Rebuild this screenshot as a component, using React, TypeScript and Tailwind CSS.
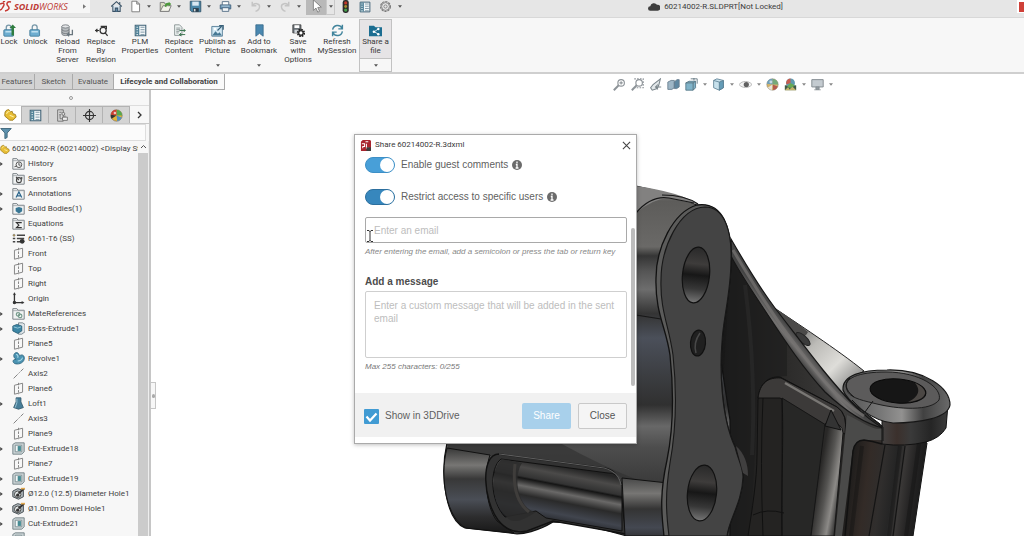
import React from "react";

type IconName = string;

function Glyph({ name }: { name: IconName }) {
  switch (name) {
    case "home":
      return (<g fill="none" stroke="#3a5266" strokeWidth="1.3"><path d="M1.5 8 8 2l6.5 6" /><path d="M3.5 7v7h9V7" fill="#dbe7f0" /><path d="M6.5 14v-4h3v4" fill="#5b87a8" /><path d="M12 2.500v3" /></g>);
    case "doc":
      return <path d="M3.500 1.500h6l3.500 3.500v9.500h-9.500zM9.500 1.500V5H13" fill="#fff" stroke="#777" strokeWidth="1.100" />;
    case "open":
      return (<g strokeWidth="1.100"><path d="M1.500 14V3h5l1 2h5v9z" fill="#d9dcc0" stroke="#777" /><path d="M1.500 14 5 7h10l-3 7z" fill="#f4f4ea" stroke="#777" /><path d="M7 8c0-3 2-5 5-4.500V2l3 3-3 3V6C10 6 9 7 9 9z" fill="#4f9a3c" stroke="none" /></g>);
    case "save":
      return (<g><path d="M1.500 1.500h13v13h-11l-2-2z" fill="#4b87a8" stroke="#2c4f66" /><path d="M4 2h8v5H4z" fill="#d8e8f2" /><path d="M5 10h7v4.500H5z" fill="#2b3e4c" /><path d="M6 11h2v3H6z" fill="#ddd" /></g>);
    case "print":
      return (<g stroke="#44607a"><path d="M4 6V2h8v4" fill="#fff" /><path d="M1.500 6h13v5h-13z" fill="#5f8fb0" /><path d="M4 9.500h8V14H4z" fill="#f2f6f8" /><path d="M3 7.500h10" stroke="#d3e3ee" /></g>);
    case "undo":
      return <path d="M4 2v5h5M4 7c3-4 9-3 9 1 0 3-2 5-5 6" fill="none" stroke="#c4c4c4" strokeWidth="1.800" />;
    case "redo":
      return <path d="M12 2v5H7M12 7C9 3 3 4 3 8c0 3 2 5 5 6" fill="none" stroke="#c4c4c4" strokeWidth="1.800" />;
    case "pointer":
      return <path d="M5 1v12l3-2.600 2 4.600 2-1-2-4.300 4-.4z" fill="#fff" stroke="#666" strokeWidth=".8" />;
    case "traffic":
      return (<g><rect x="4.500" y="0" width="7.500" height="16" rx="3" fill="#2c2c2c" /><circle cx="8.200" cy="3.600" r="2" fill="#c0392b" /><circle cx="8.200" cy="8" r="1.800" fill="#a58a2c" /><circle cx="8.200" cy="12.400" r="2" fill="#44a04a" /></g>);
    case "list":
      return (<g><path d="M1.500 1.500h13v13h-13z" fill="#f3f7f9" stroke="#3f6275" strokeWidth="1.300" /><path d="M2 2h4.500v12H2z" fill="#4f8197" /><path d="M8 4h5M8 7h5M8 10h5M8 13h5" stroke="#6a8797" /><path d="M3 4h2M3 7h2M3 10h2M3 13h2" stroke="#fff" /></g>);
    case "gear":
      return (<g fill="none" stroke="#777"><circle cx="8" cy="8" r="6" strokeWidth="1.500" strokeDasharray="2.800 1.100" /><circle cx="8" cy="8" r="4.800" /><circle cx="8" cy="8" r="2" /></g>);
    case "lock":
    case "unlock":
      return (<g><path d={name === "lock" ? "M4 8V4.500a3 3 0 0 1 6 0V8" : "M4 8V4a3 3 0 0 1 6 0v4"} fill="none" stroke="#7797a8" strokeWidth="1.600" /><rect x="1" y="7" width="12" height="8" rx="1" fill="#6eaed0" stroke="#3b7796" /><path d="M3 8.500h8v2H3z" fill="#bfe0f0" />{name === "lock" && <path d="M10.500 14V5H8l4-4.500L16 5h-2.500v9z" fill="#2f7d3f" />}</g>);
    case "server":
      return (<g><path d="M1 3v9c0 3 9 3 9 0V3" fill="#b9bdc0" stroke="#6d7377" /><ellipse cx="5.500" cy="3" rx="4.500" ry="2" fill="#e4e6e8" stroke="#6d7377" /><path d="M1 6.500c0 3 9 3 9 0M1 9.500c0 3 9 3 9 0" fill="none" stroke="#6d7377" /><path d="M14 7v6H8m2-2-2 2 2 2" fill="none" stroke="#69767e" strokeWidth="1.600" /></g>);
    case "revise":
      return (<g fill="none" stroke="#333" strokeWidth="1.500"><circle cx="10" cy="8" r="3.800" /><path d="m12.500 11 3 3.500M0 8h5M3 6 1 8l2 2M7 3h7v3" /></g>);
    case "content":
      return (<g><path d="M2 1h6l3 3v10H2z" fill="#eef3f2" stroke="#7c8788" /><path d="M4 5h5M4 7h5M4 9h4M4 11h3" stroke="#7c8788" /><path d="M8 8h7m-2-2 2 2-2 2M15 13H8m2-2-2 2 2 2" fill="none" stroke="#3c7650" strokeWidth="1.200" /></g>);
    case "picture":
      return (<g><path d="M1 3h13v12H1z" fill="#d2e8f3" stroke="#48738d" /><path d="m1.500 14 4-5 3 3 2-2 3 4z" fill="#467894" /><circle cx="5" cy="6" r="1.500" fill="#fff" /><path d="m8 8 5-5m-3-1h5v5" fill="none" stroke="#386079" strokeWidth="1.500" /></g>);
    case "bookmark":
      return <path d="M3.500 1h9v14L8 11.500 3.500 15z" fill="#4a88b0" stroke="#376a8b" />;
    case "saveopt":
      return (<g><path d="M1 1h10v10H1z" fill="#646c72" stroke="#444" /><path d="M3 1.500h6V5H3z" fill="#fff" /><path d="M3 7h5v4H3z" fill="#cdd2d6" /><circle cx="11" cy="11" r="4" fill="none" stroke="#222" strokeWidth="2.200" strokeDasharray="2.100 1" /><circle cx="11" cy="11" r="2.700" fill="#fff" stroke="#222" strokeWidth="1.500" /></g>);
    case "refresh":
      return <path d="M2 7c1-6 9-7 11.500-2M14 1v5H9M14 9c-1 6-9 7-11.500 2M2 15v-5h5" fill="none" stroke="#41849c" strokeWidth="1.800" />;
    case "share":
      return (<g><path d="M0 2h6l2 2h8v11H0z" fill="#1c6d91" /><path d="m11.500 6-5 3.500 5 3" fill="none" stroke="#fff" /><circle cx="11.500" cy="6.200" r="1.500" fill="#fff" /><circle cx="6" cy="9.500" r="1.500" fill="#fff" /><circle cx="11.500" cy="12.500" r="1.500" fill="#fff" /></g>);
    case "part":
      return (<g><path d="M1 7c0-3 2-5 5-5l2 3 2-1 1 3 3 1 1 3-4 4H7L1 10z" fill="#e7bd34" stroke="#9a7615" /><path d="M3 7c1-2 2-3 4-3M7 9l5 2" stroke="#fff0a0" strokeWidth="1.300" fill="none" /></g>);
    case "config":
      return (<g fill="none" stroke="#666"><path d="M2 1h7v14H2zM4 4h3M4 7h2M5 7v5h3" /><circle cx="9" cy="6" r="1.800" fill="#ddd" /><path d="M8 10h6v4H8zM11 10V8" fill="#eee" /></g>);
    case "target":
      return (<g fill="none" stroke="#333" strokeWidth="1.400"><circle cx="8" cy="8" r="5" /><path d="M8 0v16M0 8h16" /></g>);
    case "appearance":
      return (<g><circle cx="8" cy="8" r="7" fill="#e4b53b" stroke="#70645a" strokeWidth=".7" /><path d="M8 8V1A7 7 0 0 1 15 8z" fill="#55a84f" /><path d="M8 8V1A7 7 0 0 0 1 7z" fill="#cc3f34" /><path d="M8 8 2 12A7 7 0 0 1 1 7z" fill="#333" /><path d="m8 8 6.500 2.500A7 7 0 0 1 9 15z" fill="#4f8fc4" /><circle cx="6" cy="5" r="1.500" fill="#fff" opacity=".7" /></g>);
    case "palette":
      return (<g><circle cx="8" cy="8" r="7" fill="#d2b36a" stroke="#8a8580" strokeWidth=".7" /><path d="M8 8V1A7 7 0 0 1 15 8z" fill="#74a97a" /><path d="M8 8V1A7 7 0 0 0 1 7z" fill="#6f9fb8" /><path d="m8 8 6.500 2.500A7 7 0 0 1 9 15z" fill="#b45a4e" /><path d="M8 8 2 12l5 3z" fill="#e8e3da" /><circle cx="6" cy="5" r="1.800" fill="#fff" opacity=".6" /></g>);
    case "history": case "sensor": case "annot": case "solid": case "equation": case "mate":
      return (<g><path d="M1 15V2h5l1.500 2H15v11z" fill="#f1f3f3" stroke="#7b8388" strokeWidth="1.200" /><path d="M1 4.500h14" stroke="#9aa0a4" />
        {name === "history" && <g fill="none" stroke="#555" strokeWidth="1.200"><circle cx="8.500" cy="9.500" r="3.500" /><path d="M8.500 7v3h2M3 12l3-1" /></g>}
        {name === "sensor" && <g fill="none" stroke="#444" strokeWidth="1.400"><circle cx="8.500" cy="10" r="3" /><path d="M8.500 10 5 6M12 6v3" /></g>}
        {name === "annot" && <path d="m5 13 3.500-7 3.500 7M6.500 11h4" fill="none" stroke="#2d668c" strokeWidth="1.500" />}
        {name === "solid" && <path d="m8.500 6 4 1.500v4l-4 2.500-4-2.500v-4z" fill="#387795" />}
        {name === "equation" && <path d="M12 7H5.500l3 3-3 3H12" fill="none" stroke="#333" strokeWidth="1.400" />}
        {name === "mate" && <g fill="none" stroke="#779c8d" strokeWidth="1.500"><circle cx="7.500" cy="9" r="2.200" /><circle cx="10" cy="11" r="2.200" /></g>}
      </g>);
    case "material":
      return (<g stroke="#444" strokeWidth="1.700"><path d="M6 4h10M6 8h9M6 12h4" /><circle cx="2.500" cy="4" r="1.300" fill="#c5a03a" stroke="#777" strokeWidth=".8" /><path d="M1 8h3M1 12h3" /><circle cx="12.500" cy="11.500" r="3" fill="#333" stroke="none" /></g>);
    case "plane":
      return <g fill="none" stroke="#858585" strokeWidth="1.200"><path d="M3 4 13 1.500v11L3 15z" /><path d="M8 1v14" strokeDasharray="3 1.500" /></g>;
    case "origin":
      return <g stroke="#333" strokeWidth="1.600" fill="#333"><path d="M3 2v11h11" fill="none" /><circle cx="3" cy="13" r="1.300" /><path d="m1.500 3.500 1.500-3 1.500 3zM12 11.500l3 1.500-3 1.500z" strokeWidth=".3" /></g>;
    case "axis":
      return <path d="M2 14 14 2" stroke="#777" strokeWidth="1.100" strokeDasharray="7 1.500 2 1.500" />;
    case "boss":
      return (<g><path d="M8 1h5l3 2v9l-4 3H8z" fill="#dfe5e8" stroke="#6d7b83" /><path d="m1 5 5-2 6 2v6l-5 3-6-3z" fill="#3d86a5" stroke="#255b74" /><path d="m2 6 5 1.500L11 6" stroke="#a5d5e5" fill="none" /></g>);
    case "revolve":
      return (<g><path d="M3 2c3-3 6 0 6 3 3-3 7-1 6 4-1 5-8 7-12 5-3-2-2-5 2-5C3 8 1 5 3 2z" fill="#4b93b2" stroke="#2a617b" /><path d="M5 3c2 0 3 2 2 4M7 11c3 0 5-1 6-4" fill="none" stroke="#acdceb" strokeWidth="1.300" /></g>);
    case "loft":
      return (<g><path d="M5 1h6v5l3 7-6 2-6-2 3-7z" fill="#477e99" stroke="#30566a" /><path d="M6 2v5l-2 6" stroke="#a7d0e0" fill="none" /></g>);
    case "cut":
      return (<g><path d="m1 3 3-2h11v11l-3 3H1z" fill="#c9d2d4" stroke="#68787d" /><path d="M4 4h8v8H4z" fill="#f3f7f7" stroke="#74878c" /><path d="M7 5h4v6H7z" fill="#468c94" /></g>);
    case "hole":
      return (<g><path d="m1 5 6-3 7 2v8l-6 3-7-3z" fill="#aeb7bb" stroke="#474f54" strokeWidth="1.200" /><circle cx="7" cy="9" r="4" fill="#e1e5e6" stroke="#333" /><circle cx="7" cy="10" r="2" fill="#333" /><path d="m8 8 7-6" stroke="#333" strokeWidth="2.400" /><path d="M11 1h5v2h-5z" fill="#e1a84e" /></g>);
    case "filter":
      return <path d="M1 2h14L9.500 8v6l-3 1.500V8z" fill="#5d91ad" stroke="#3d6478" strokeWidth="1.200" />;
    case "zoomfit": case "zoomarea":
      return (<g fill="none" stroke="#8d9398" strokeWidth="1.400"><circle cx="10" cy="6" r="4" /><path d="m7 9-6 6" strokeWidth="2.400" />{name === "zoomfit" ? <path d="M10 4v4M8 6h4" /> : <path d="M4 1h11v11H5" strokeDasharray="2 1.500" />}</g>);
    case "prev":
      return (<g fill="none" stroke="#7a858b" strokeWidth="1.300"><path d="m14 1-9 7-3 4 2 3 6-2 2-4z" fill="#e3e8ea" /><path d="M15 11H8m3-3-3 3 3 3" /></g>);
    case "section":
      return (<g stroke="#62798a"><path d="M1 5 5 3h4v9l-3 2H1z" fill="#9eb6c6" /><path d="m9 5 3-3h3v9l-3 2H9z" fill="#5f87a1" /></g>);
    case "orient":
      return (<g><path d="m1 6 4-2h8v8l-3 3H1z" fill="#80b3c9" stroke="#4f7384" /><path d="M1 6h9v9M10 6l3-2M7 1h8v6M11 0v3" fill="none" stroke="#566c78" /></g>);
    case "cube":
      return (<g stroke="#597c90"><path d="m2 3 4-2 8 2v9l-5 3-7-3z" fill="#c7e1ec" /><path d="m9 5 5-2v9l-5 3z" fill="#649cb7" /><path d="m2 3 7 2" fill="none" /></g>);
    case "eye":
      return (<g><path d="M0 8c4-5 12-5 16 0-4 5-12 5-16 0z" fill="#f3f3f3" stroke="#aaa" /><circle cx="9" cy="8" r="3.200" fill="#606060" /></g>);
    case "scene":
      return (<g><path d="M1 9h14v6H1z" fill="#3f5a48" /><path d="m1 15 4-4 2 3 3-4 5 5z" fill="#c4b36b" /><circle cx="8" cy="6" r="5.500" fill="#6099ae" /><path d="M8 6V.5A5.500 5.500 0 0 0 3 8z" fill="#c75c4f" /><path d="m8 6 5 3A5.500 5.500 0 0 1 4 10z" fill="#67a953" /></g>);
    case "monitor":
      return (<g><path d="M1 2h14v9H1z" fill="#c4cbd0" stroke="#858c91" strokeWidth="1.200" /><path d="M6 11h4v3H6zM4 14.500h8" fill="#929ba0" stroke="#858c91" /></g>);
    case "cloud":
      return <path d="M3 13a3 3 0 0 1 0-6 5 5 0 0 1 9-2 4 4 0 0 1 1 8z" fill="#3e3e3e" />;
    default:
      return null;
  }
}

function Icon({ name, size = "h-3 w-3" }: { name: IconName; size?: string }) {
  return <svg viewBox="0 0 16 16" aria-hidden="true" className={`${size} shrink-0`}><Glyph name={name} /></svg>;
}

function Caret() {
  return <svg viewBox="0 0 6 4" aria-hidden="true" className="h-[3px] w-1 shrink-0"><path d="M0 0h6L3 4z" fill="#555" /></svg>;
}

const quick = ["doc", "open", "save", "print", "undo", "redo"];

function TitleBar() {
  return (
    <header className="flex h-[18px] shrink-0 items-center border-b border-[#d8d8d8] bg-[#e6e6e6] pb-1">
      <div className="flex h-full w-[90px] shrink-0 items-center bg-[#f6f6f6] text-[9px] leading-3">
        <svg viewBox="0 0 12 12" aria-hidden="true" className="h-3 w-3 shrink-0"><path d="M0 3c4-2 5 0 3 3-1 2-2 3-3 3M11 1C7 0 6 3 8 5s1 4-3 5M3 1l2-1" fill="none" stroke="#c63a34" strokeWidth="1.500" /></svg>
        <span className="pl-[2px] font-['Open_Sans','Noto_Sans',sans-serif] text-[#bd3a35] italic"><b>SOLID</b>WORKS</span>
        <svg viewBox="0 0 4 6" aria-hidden="true" className="ml-auto mr-1 h-[5px] w-[3px]"><path d="M0 0v6l4-3z" fill="#777" /></svg>
      </div>
      <nav className="flex h-full items-center pl-[18px]" aria-label="Quick access">
        <button aria-label="Home" className="mr-[2px] flex w-4 justify-center"><Icon name="home" size="h-[13px] w-[13px]" /></button>
        {quick.map((q) => (
          <button key={q} aria-label={q} className="flex w-[30px] items-center pl-[3px]"><Icon name={q} size="h-[13px] w-[13px]" /><span className="flex w-[14px] justify-center"><Caret /></span></button>
        ))}
        <button aria-label="Select" className="-mt-1 flex h-[21px] w-5 items-center justify-center bg-[#b9b9b9] pt-[2px]"><Icon name="pointer" size="h-[14px] w-[14px]" /></button>
        <button aria-label="Select options" className="-mt-1 flex h-[21px] w-[9px] items-center justify-center border border-[#c9c9c9] pt-1"><Caret /></button>
        <button aria-label="Rebuild" className="flex w-5 justify-center"><Icon name="traffic" size="h-[13px] w-[13px]" /></button>
        <button aria-label="File properties" className="flex w-5 justify-center"><Icon name="list" /></button>
        <button aria-label="Options" className="flex w-5 justify-center"><Icon name="gear" size="h-[13px] w-[13px]" /></button>
        <button aria-label="More options" className="flex w-[10px] justify-center"><Caret /></button>
      </nav>
      <div className="ml-auto flex items-center gap-1 text-[8px] leading-[10px] text-[#3c3c3c]">
        <Icon name="cloud" /> 60214002-R.SLDPRT[Not Locked]
      </div>
      <button aria-label="Account" className="ml-[234px] flex h-full w-[7px] shrink-0 items-center bg-white pl-[2px]"><span className="h-[10px] w-full bg-[#cf4038]" /></button>
    </header>
  );
}

const commands = [
  { icon: "lock", lines: ["Lock"], w: "w-[18px]" },
  { icon: "unlock", lines: ["Unlock"], w: "w-[35px]" },
  { icon: "server", lines: ["Reload", "From", "Server"], w: "w-[29px]" },
  { icon: "revise", lines: ["Replace", "By", "Revision"], w: "w-[38px]" },
  { icon: "list", lines: ["PLM", "Properties"], w: "w-[40px]" },
  { icon: "content", lines: ["Replace", "Content"], w: "w-[38px]" },
  { icon: "picture", lines: ["Publish as", "Picture"], w: "w-[39px]", menu: true },
  { icon: "bookmark", lines: ["Add to", "Bookmark"], w: "w-[44px]", menu: true },
  { icon: "saveopt", lines: ["Save", "with", "Options"], w: "w-[34px]" },
  { icon: "refresh", lines: ["Refresh", "MySession"], w: "w-[44px]" },
  { icon: "share", lines: ["Share a", "file"], w: "w-[33px]", menu: true, active: true },
];

function Ribbon() {
  return (
    <div className="flex h-14 shrink-0 border-b-2 border-[#cfcfcf] bg-[#f7f7f7] pt-px">
      {commands.map((c) => (
        <button key={c.lines.join(" ")} className={`flex h-[53px] shrink-0 flex-col items-center text-[8px] leading-[9px] whitespace-nowrap text-[#3a3a3a] ${c.w} ${c.active ? "border border-[#c2c2c2]" : "border-y border-transparent"}`}>
          <span className={`flex h-[39px] w-full flex-col items-center pt-1 ${c.active ? "border-b border-[#c2c2c2] bg-[#e6e4e6]" : ""}`}>
            <Icon name={c.icon} size="h-[13px] w-[13px]" />
            {c.lines.map((l) => <span key={l}>{l}</span>)}
          </span>
          {c.menu && <span className="flex flex-1 items-center"><Caret /></span>}
        </button>
      ))}
    </div>
  );
}

function RibbonTabs() {
  const tab = "border-r border-b border-[#aaa] bg-[#d3d3d3] text-[#555]";
  return (
    <nav className="flex h-4 shrink-0 bg-white text-[8px] leading-[14px]">
      <button className={`w-[35px] whitespace-nowrap ${tab}`}>Features</button>
      <button className={`w-[38px] ${tab}`}>Sketch</button>
      <button className={`w-[41px] ${tab}`}>Evaluate</button>
      <button className="w-[111px] border-r border-b border-[#aaa] bg-[#fafafa] font-bold whitespace-nowrap text-[#444]">Lifecycle and Collaboration</button>
    </nav>
  );
}

const tree: [string, string, boolean][] = [
  ["history", "History", true], ["sensor", "Sensors", false], ["annot", "Annotations", true], ["solid", "Solid Bodies(1)", true],
  ["equation", "Equations", false], ["material", "6061-T6 (SS)", false], ["plane", "Front", false], ["plane", "Top", false],
  ["plane", "Right", false], ["origin", "Origin", false], ["mate", "MateReferences", true], ["boss", "Boss-Extrude1", true],
  ["plane", "Plane5", false], ["revolve", "Revolve1", true], ["axis", "Axis2", false], ["plane", "Plane6", false],
  ["loft", "Loft1", true], ["axis", "Axis3", false], ["plane", "Plane9", false], ["cut", "Cut-Extrude18", true],
  ["plane", "Plane7", false], ["cut", "Cut-Extrude19", true], ["hole", "Ø12.0 (12.5) Diameter Hole1", true],
  ["hole", "Ø1.0mm Dowel Hole1", true], ["cut", "Cut-Extrude21", true], ["cut", "Cut-Extrude20", true],
];

function FeaturePanel() {
  return (
    <aside className="flex min-h-0 w-[151px] shrink-0 flex-col overflow-hidden border-r-2 border-[#c6c6c6] bg-[#f7f7f7]">
      <div className="flex h-4 shrink-0 items-center border-b border-[#ddd] pl-[69px]"><span className="h-1 w-1 rounded-full border border-[#999]" /></div>
      <div className="flex h-[18px] shrink-0 items-stretch border-b border-[#c8c8c8]">
        {["part", "list", "config", "target", "appearance"].map((n, i) => (
          <button key={n} aria-label={n} className={`flex items-center justify-center border-r border-[#b3b3b3] ${i === 0 ? "w-[22px] bg-white" : "w-[27px] border-t bg-[#d4d4d4]"}`}><Icon name={n} size="h-[13px] w-[13px]" /></button>
        ))}
        <button aria-label="More tabs" className="flex flex-1 items-center justify-center"><svg viewBox="0 0 6 8" className="h-2 w-[6px]"><path d="m1 1 3 3-3 3" fill="none" stroke="#333" strokeWidth="1.300" /></svg></button>
      </div>
      <div className="mr-[3px] flex h-[17px] shrink-0 items-center border border-l-0 border-[#ddd] bg-[#fbfbfb]"><Icon name="filter" size="h-3 w-3" /></div>
      <div className="flex min-h-0 flex-1">
        <ul className="min-w-0 flex-1 overflow-hidden text-[8px] leading-[15px] whitespace-nowrap text-[#3f3f3f]">
          <li className="flex h-[15px] items-center gap-[2px]"><Icon name="part" size="h-[10px] w-[10px]" />60214002-R (60214002) &lt;Display Sta</li>
          {tree.map(([icon, label, more]) => (
            <li key={label} className="flex h-[15px] items-center">
              <span className="w-3 shrink-0">{more && <svg viewBox="0 0 4 6" aria-hidden="true" className="h-1 w-[3px]"><path d="M0 0v6l4-3z" fill="#444" /></svg>}</span>
              <Icon name={icon} size="h-[13px] w-[13px]" /><span className="pl-[3px]">{label}</span>
            </li>
          ))}
        </ul>
        <div className="flex w-[11px] shrink-0 flex-col border-r border-[#eee]">
          <svg viewBox="0 0 10 12" aria-hidden="true" className="h-3 w-[10px]"><path d="m3 7 2.500-2.500L8 7" fill="none" stroke="#555" /></svg>
          <div className="flex-1 bg-[#cbcbcb]" />
        </div>
      </div>
    </aside>
  );
}

function Bracket() {
  return (
    <svg viewBox="430 180 594 356" role="img" aria-label="Bracket part model" className="absolute right-0 bottom-0 h-[356px] w-[594px]">
      <defs>
        <linearGradient id="body" gradientUnits="userSpaceOnUse" x1="0" y1="186" x2="0" y2="490">
          <stop offset="0" stopColor="#8b8b89" /><stop offset=".05" stopColor="#5d5c5a" /><stop offset=".2" stopColor="#6a6967" /><stop offset=".23" stopColor="#353535" /><stop offset=".28" stopColor="#555" /><stop offset=".34" stopColor="#6d6d6d" /><stop offset=".42" stopColor="#343434" /><stop offset=".5" stopColor="#4b505a" /><stop offset=".62" stopColor="#3c3e42" /><stop offset=".72" stopColor="#303030" /><stop offset=".79" stopColor="#686868" /><stop offset=".86" stopColor="#4d4d4d" /><stop offset="1" stopColor="#373737" />
        </linearGradient>
        <linearGradient id="cyl" gradientUnits="userSpaceOnUse" x1="0" y1="448" x2="0" y2="534">
          <stop offset="0" stopColor="#383838" /><stop offset=".2" stopColor="#777674" /><stop offset=".36" stopColor="#383838" /><stop offset=".6" stopColor="#4a4e56" /><stop offset=".8" stopColor="#2d2d2e" /><stop offset="1" stopColor="#171717" />
        </linearGradient>
        <linearGradient id="cylFront" gradientUnits="userSpaceOnUse" x1="0" y1="478" x2="0" y2="540">
          <stop offset="0" stopColor="#484848" /><stop offset=".25" stopColor="#777674" /><stop offset=".5" stopColor="#343434" /><stop offset=".8" stopColor="#444851" /><stop offset="1" stopColor="#2d2d2e" />
        </linearGradient>
        <linearGradient id="bar" gradientUnits="userSpaceOnUse" x1="560" y1="466" x2="548" y2="528">
          <stop offset="0" stopColor="#252525" /><stop offset=".13" stopColor="#4b4a49" /><stop offset=".27" stopColor="#333" /><stop offset=".3" stopColor="#151515" /><stop offset=".42" stopColor="#6a6968" /><stop offset=".56" stopColor="#2a2a2a" /><stop offset=".75" stopColor="#41454e" /><stop offset="1" stopColor="#111" />
        </linearGradient>
        <linearGradient id="web" x1="0" y1="0" x2="1" y2="0">
          <stop offset="0" stopColor="#171717" /><stop offset=".3" stopColor="#2b2a29" /><stop offset=".6" stopColor="#3d3c3b" /><stop offset="1" stopColor="#302f2e" />
        </linearGradient>
        <linearGradient id="silver" gradientUnits="userSpaceOnUse" x1="785" y1="325" x2="855" y2="395">
          <stop offset="0" stopColor="#555" /><stop offset=".35" stopColor="#bcbbb7" /><stop offset=".65" stopColor="#deddd9" /><stop offset="1" stopColor="#777" />
        </linearGradient>
        <linearGradient id="ridge" gradientUnits="userSpaceOnUse" x1="796" y1="360" x2="808" y2="350">
          <stop offset="0" stopColor="#333" /><stop offset=".5" stopColor="#747271" /><stop offset="1" stopColor="#444" />
        </linearGradient>
        <linearGradient id="tube" gradientUnits="userSpaceOnUse" x1="819" y1="475" x2="846" y2="480">
          <stop offset="0" stopColor="#292827" /><stop offset=".35" stopColor="#555452" /><stop offset=".65" stopColor="#8c8a87" /><stop offset=".85" stopColor="#4a4948" /><stop offset="1" stopColor="#262626" />
        </linearGradient>
        <linearGradient id="leg" gradientUnits="userSpaceOnUse" x1="848" y1="480" x2="922" y2="490">
          <stop offset="0" stopColor="#1d1c1b" /><stop offset=".25" stopColor="#332b27" /><stop offset=".45" stopColor="#302e2d" /><stop offset=".6" stopColor="#252525" /><stop offset=".72" stopColor="#393736" /><stop offset=".85" stopColor="#252424" /><stop offset="1" stopColor="#1b1b1b" />
        </linearGradient>
        <linearGradient id="side" gradientUnits="userSpaceOnUse" x1="880" y1="0" x2="948" y2="0">
          <stop offset="0" stopColor="#454444" /><stop offset=".25" stopColor="#3b302c" /><stop offset=".45" stopColor="#3a3a3a" /><stop offset=".75" stopColor="#252525" /><stop offset="1" stopColor="#3c3c3c" />
        </linearGradient>
        <linearGradient id="rim" x1="0" y1="0" x2="1" y2="0">
          <stop offset="0" stopColor="#515151" /><stop offset=".35" stopColor="#777" /><stop offset=".55" stopColor="#929190" /><stop offset=".75" stopColor="#414141" /><stop offset="1" stopColor="#6a6a6a" />
        </linearGradient>
        <linearGradient id="bore" x1="0" y1="0" x2="0" y2="1">
          <stop offset="0" stopColor="#292929" /><stop offset=".3" stopColor="#3e3c3b" /><stop offset=".5" stopColor="#171717" /><stop offset=".75" stopColor="#373737" /><stop offset="1" stopColor="#777" />
        </linearGradient>
      </defs>

      <path d="M730 240C745 265 775 312 800 345C830 378 858 412 884 427L927 443L913 536H725L720 330Z" fill="url(#web)" stroke="#111" />
      <path d="M731 255C745 285 765 310 787 340V376C772 376 760 384 758 400L750 536H727L722 400Z" fill="#1d1d1d" opacity=".65" />
      <path d="M745 285C752 340 755 400 752 455" fill="none" stroke="#333" strokeWidth="4" opacity=".4" />
      <path d="M773 307C795 322 838 350 864 371L846 382Q842 390 849 400L880 424C845 402 820 372 803 345Z" fill="url(#silver)" stroke="#222" />
      <path d="M773 307C785 315 798 323 808 332C805 338 800 338 796 336Z" fill="#4b4a49" />
      <ellipse cx="803" cy="339" rx="9" ry="3.500" transform="rotate(42 803 339)" fill="#3b3b3b" stroke="#222" />
      <path d="M731 239C746 265 760 288 775 308C792 330 810 354 823 370C845 397 862 416 883 428C861 423 840 406 825 392C800 365 780 333 762 306C748 285 738 270 731 256Z" fill="url(#ridge)" stroke="#161616" strokeWidth="1.200" />
      <path d="M733 250C752 282 768 308 788 335C812 367 835 398 864 416" fill="none" stroke="#777574" strokeWidth="3" opacity=".7" />

      <path d="M748 536C752 510 757 480 757 455L758 400C759 384 768 376 780 377L837 407Q848 414 846 435L836 536Z" fill="#242322" stroke="#111" />
      <path d="M758 398C760 383 768 377 781 378L837 407Q848 414 845 434L825 425L780 398Z" fill="#3c3a39" stroke="#111" />
      <path d="M785 383 834 411" stroke="#797774" strokeWidth="2.500" />
      <path d="M782 398 826 425 811 536H782Z" fill="#272726" stroke="#161616" />
      <path d="M763 398Q760 460 763 536M782 398C784 440 781 480 782 536M753 515Q767 508 784 513" fill="none" stroke="#111" />
      <path d="M828 421Q843 423 843 433L834 536H811L825 424Z" fill="url(#tube)" stroke="#171717" />
      <path d="M831 410 825 426 841 430Z" fill="#333" stroke="#111" />
      <path d="M847 415C860 420 870 430 882 429V440H863Q854 440 853 452L845 536H835L845 435Z" fill="#4a4a49" />
      <path d="M927 441 913 536H842L852 455Q853 441 865 440Z" fill="url(#leg)" />
      <path d="M885 445 869 536M905 446 893 536" fill="none" stroke="#141414" strokeWidth="1.200" />
      <path d="M900 446 889 536M862 446 851 536M919 444 906 536" fill="none" stroke="#121212" strokeWidth="4" opacity=".4" />
      <path d="M882 418Q925 420 948 404L946 428Q940 438 926 442Q905 447 882 444Z" fill="url(#side)" stroke="#111" />
      <path d="M882 444Q872 441 864 440Q855 440 853 451L845 536" fill="none" stroke="#111" strokeWidth="1.400" />
      <path d="M843 390C842 375 862 370 887 370C925 369 950 388 950 405C948 418 920 423 893 423C875 422 847 402 843 390Z" fill="url(#rim)" stroke="#171717" strokeWidth="1.200" />
      <path d="M847 390C842 378 859 372 886 372C920 372 943 388 939 400C931 411 899 410 873 403C860 400 849 397 847 390Z" fill="#5c5b5b" stroke="#1f1f1f" />
      <ellipse cx="898" cy="391" rx="28" ry="12" transform="rotate(5 898 391)" fill="#161616" stroke="#090909" />
      <path d="M908 402C920 401 926 396 925 392C924 388 920 385 915 383C922 391 917 398 908 402Z" fill="#4b4744" />
      <path d="M873 401 865 412M854 397C845 390 844 383 850 378M852 400C866 414 876 422 883 427V441" fill="none" stroke="#171717" />

      <path d="M447 443 560 440V190L636 186C655 190 675 195 697 205L730 420V536H627C605 530 580 523 553 522C540 530 522 536 510 533L465 528C447 521 439 478 447 443Z" fill="url(#body)" stroke="#111" strokeWidth="1.200" />
      <path d="M636 186Q680 192 700 205L669 198Q652 199 636 213Z" fill="#828180" />
      <path d="M636 213Q651 195 669 198L694 203M662 195Q685 195 698 204M636 315 661 319" fill="none" stroke="#171717" strokeWidth="1.200" />
      <path d="M560 443 448 444V448L490 456 611 472Q621 476 622 479L640 481Q600 465 560 443Z" fill="#333" opacity=".7" />
      <path d="M447 448 490 455C483 475 486 507 497 521L514 533L466 528C447 519 439 478 447 448Z" fill="url(#cyl)" stroke="#111" />
      <path d="M499 454C480 454 483 500 498 520Q510 535 527 531L553 521L626 534 620 485Q618 470 604 468Z" fill="#323232" stroke="#111" strokeWidth="1.400" />
      <path d="M501 459C489 468 490 501 505 517L536 511 546 518 622 531V484Q617 472 608 473Z" fill="url(#bar)" stroke="#111" />
      <path d="M502 459C490 469 490 502 506 516C512 525 522 521 536 512C519 510 512 478 522 463Z" fill="#2b2b2b" opacity=".85" />
      <path d="M515 464Q511 498 529 512" fill="none" stroke="#3f3d3b" strokeWidth="3" />
      <path d="M499 454 604 468Q619 472 621 485" fill="none" stroke="#5c5c5c" strokeWidth="1.200" />
      <path d="M622 478 668 483 664 536H625Z" fill="url(#cylFront)" stroke="#111" />

      <path d="M697 205C673 212 656 248 656 278C655 313 666 327 670 355C674 393 673 430 667 460C660 492 661 510 664 536H727C729 519 742 503 743 477C743 467 738 460 735 447C720 415 720 365 722 342C723 319 731 292 731 260C732 229 723 201 697 205Z" fill="#5b5b5a" stroke="#111" strokeWidth="1.300" />
      <path d="M705 207C679 208 661 248 661 280C660 310 669 326 673 355C677 393 676 430 670 463C665 494 666 512 669 536H727C729 519 742 503 743 477C743 467 738 460 735 447C720 415 720 365 722 342C723 319 731 292 731 260C732 233 725 207 705 207Z" fill="#444444" stroke="#181818" strokeWidth="1.100" />
      <path d="M736 446C744 453 748 463 748 476L743 473Z" fill="#403f3f" />
      <g stroke="#111" strokeWidth="1.200">
        <ellipse cx="696" cy="275" rx="13.500" ry="28" transform="rotate(6 696 275)" fill="url(#bore)" />
        <ellipse cx="698" cy="343" rx="7.500" ry="13" transform="rotate(5 698 343)" fill="#202020" />
        <ellipse cx="702" cy="493" rx="14.500" ry="28" transform="rotate(6 702 493)" fill="url(#bore)" />
      </g>
      <path d="M700 333Q693 343 696 353" fill="none" stroke="#484848" strokeWidth="1.500" />
    </svg>
  );
}

const viewTools: [string, boolean][] = [["zoomfit", false], ["zoomarea", false], ["prev", false], ["section", false], ["orient", true], ["cube", true], ["eye", true], ["palette", false], ["scene", true], ["monitor", true]];

function ViewTools() {
  return (
    <div className="absolute top-[78px] right-[191px] flex items-center gap-[5px]">
      {viewTools.map(([n, menu]) => (
        <button key={n} aria-label={n} className="flex items-center"><Icon name={n} size="h-[13px] w-[13px]" />{menu && <span className="flex w-[9px] justify-end opacity-70"><Caret /></span>}</button>
      ))}
    </div>
  );
}

function Info() {
  return <svg viewBox="0 0 10 10" role="img" aria-label="Information" className="h-[10px] w-[10px]"><circle cx="5" cy="5" r="5" fill="#6b6b6b" /><path d="M5 1.500v1.700M3.800 4.500H5v3.500M3.600 8h2.900" stroke="#fff" strokeWidth="1.300" fill="none" /></svg>;
}

function Toggle({ label, tone }: { label: string; tone: string }) {
  return (
    <div className="flex h-4 items-center">
      <label className="flex items-center gap-[6px]">
        <input type="checkbox" defaultChecked className={`flex h-4 w-[30px] appearance-none justify-end rounded-full border ${tone} before:h-[14px] before:w-[14px] before:rounded-full before:bg-white before:content-['']`} />
        {label}
      </label>
      <span className="pl-1"><Info /></span>
    </div>
  );
}

function ShareDialog() {
  return (
    <section role="dialog" aria-labelledby="share-title" className="absolute top-[134px] left-[354px] flex w-[283px] flex-col border border-[#aaa] bg-white pb-[6px] font-['Liberation_Sans',Arial,sans-serif] text-[10px] leading-4 text-[#5f5f5f] shadow-[0_1px_4px_rgba(0,0,0,0.25)]">
      <div className="flex h-[22px] items-center pr-[5px] pb-[2px] pl-[5px] font-[Roboto,'Noto_Sans',sans-serif] text-[8px] text-[#3a3a3a]">
        <svg viewBox="0 0 12 12" aria-hidden="true" className="mr-1 h-[11px] w-[11px]"><path d="m1 2 2-2h8l1 1v8l-2 3H1z" fill="#a8242e" /><path d="M2 4h3v3H3v2M7 4v5h3M6 2h3" stroke="#fff" strokeWidth="1.100" fill="none" /><path d="M7 8h5v4H7z" fill="#3c3c3c" /></svg>
        <h1 id="share-title">Share 60214002-R.3dxml</h1>
        <button aria-label="Close dialog" className="ml-auto"><svg viewBox="0 0 10 10" className="h-[9px] w-[9px]"><path d="m1 1 8 8M9 1 1 9" stroke="#444" strokeWidth="1.200" /></svg></button>
      </div>
      <div className="relative flex h-[236px] flex-col pr-[9px] pl-[10px]">
        <Toggle label="Enable guest comments" tone="border-[#3d8fc6] bg-[#489fd8]" />
        <div className="h-4" />
        <Toggle label="Restrict access to specific users" tone="border-[#2c6f9e] bg-[#3787bd]" />
        <input aria-label="Email" placeholder="Enter an email" className="mt-3 h-[26px] rounded-[2px] border border-[#a9a9a9] px-2 placeholder:text-[#bdbdbd]" />
        <p className="pt-px text-[8px] whitespace-nowrap text-[#888] italic">After entering the email, add a semicolon or press the tab or return key</p>
        <label htmlFor="message" className="pt-[14px] font-bold text-[#4c4c4c]">Add a message</label>
        <textarea id="message" placeholder="Enter a custom message that will be added in the sent email" className="mt-px h-[67px] shrink-0 resize-none rounded-[2px] border border-[#cfcfcf] px-2 py-[7px] leading-[13px] placeholder:text-[#bdbdbd]" />
        <p className="pt-px text-[8px] text-[#777] italic">Max 255 characters: 0/255</p>
        <div className="absolute top-[71px] right-px h-[158px] w-1 rounded-full bg-[#bcbcbc]" />
        <svg viewBox="0 0 6 12" aria-hidden="true" className="absolute top-[73px] left-3 h-3 w-[6px]"><path d="M0 .5h2l1 1 1-1h2M3 1v10M0 11.500h2l1-1 1 1h2" fill="none" stroke="#333" /></svg>
      </div>
      <div className="flex h-11 items-center bg-[#f1f1f1] pt-[2px] pr-[9px] pl-[9px]">
        <label className="relative flex items-center gap-[6px]">
          <input type="checkbox" defaultChecked className="h-[15px] w-[15px] appearance-none rounded-[1px] bg-[#419bd3]" />
          <svg viewBox="0 0 15 15" aria-hidden="true" className="pointer-events-none absolute left-0 h-[15px] w-[15px]"><path d="m2.500 7.500 3.500 4 6.500-7" fill="none" stroke="#fff" strokeWidth="2.200" /></svg>
          Show in 3DDrive
        </label>
        <button className="ml-auto h-[26px] w-[49px] rounded-[2px] bg-[#a8d0eb] text-white">Share</button>
        <button className="ml-[7px] h-[26px] w-[49px] rounded-[2px] border border-[#c9c9c9] bg-[#f5f5f5] text-[#555]">Close</button>
      </div>
    </section>
  );
}

export default function App() {
  return (
    <div className="relative flex h-screen flex-col overflow-hidden bg-white font-[Roboto,'Noto_Sans',sans-serif]">
      <TitleBar />
      <Ribbon />
      <RibbonTabs />
      <main className="flex min-h-0 flex-1">
        <FeaturePanel />
        <div className="flex-1" />
      </main>
      <Bracket />
      <button aria-label="Collapse panel" className="absolute top-[382px] left-[150px] flex h-[27px] w-[6px] items-center justify-center border border-[#c6c6c6] bg-[#f7f7f7]"><span className="h-1 w-[3px] rounded-full bg-[#aaa]" /></button>
      <ViewTools />
      <ShareDialog />
    </div>
  );
}
